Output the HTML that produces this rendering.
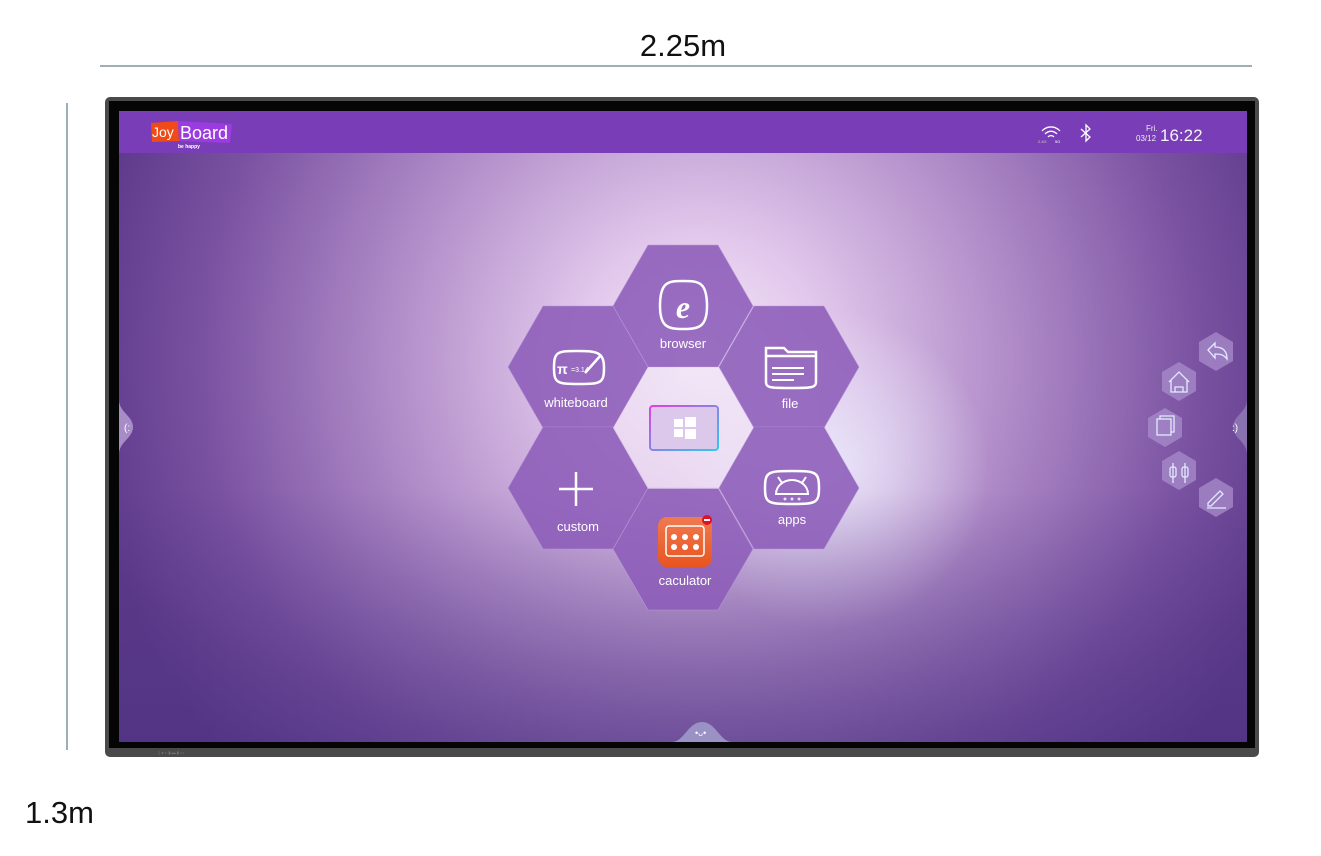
<!DOCTYPE html>
<html><head><meta charset="utf-8"><style>
html,body{margin:0;padding:0;background:#fff;}
svg{display:block;font-family:"Liberation Sans",sans-serif;}
</style></head><body>
<svg width="1321" height="856" viewBox="0 0 1321 856" xmlns="http://www.w3.org/2000/svg">
<defs>
<radialGradient id="bg1" cx="700" cy="360" r="620" gradientUnits="userSpaceOnUse">
<stop offset="0" stop-color="#f3e8f8"/>
<stop offset="0.2" stop-color="#e2c8ec"/>
<stop offset="0.5" stop-color="#b08cc8"/>
<stop offset="0.8" stop-color="#7a52a2"/>
<stop offset="1" stop-color="#5e3a8a"/>
</radialGradient>
<radialGradient id="bg2" cx="830" cy="470" r="160" gradientUnits="userSpaceOnUse">
<stop offset="0" stop-color="#eef0ff" stop-opacity="0.8"/>
<stop offset="1" stop-color="#eef0ff" stop-opacity="0"/>
</radialGradient>
<linearGradient id="bot" x1="0" y1="0" x2="0" y2="1">
<stop offset="0.6" stop-color="#4a3080" stop-opacity="0"/>
<stop offset="1" stop-color="#4a3080" stop-opacity="0.55"/>
</linearGradient>
<linearGradient id="win" x1="0" y1="0" x2="1" y2="1">
<stop offset="0" stop-color="#e040e0"/><stop offset="1" stop-color="#30c8f0"/>
</linearGradient>
<linearGradient id="calc" x1="0" y1="0" x2="0" y2="1">
<stop offset="0" stop-color="#f07a50"/><stop offset="1" stop-color="#e85420"/>
</linearGradient>
</defs>
<text x="683" y="56" font-size="31" text-anchor="middle" fill="#111">2.25m</text>
<line x1="100" y1="66" x2="1252" y2="66" stroke="#3f5f6f" stroke-width="1"/>
<line x1="67" y1="103" x2="67" y2="750" stroke="#3f5f6f" stroke-width="1"/>
<text x="25" y="823" font-size="31" fill="#111">1.3m</text>

<rect x="105" y="97" width="1154" height="660" rx="5" fill="#4a4a4a"/>
<rect x="109" y="101" width="1146" height="647" fill="#050505"/>
<rect x="119" y="111" width="1128" height="631" fill="url(#bg1)"/>
<rect x="119" y="111" width="1128" height="631" fill="url(#bg2)"/>
<rect x="119" y="111" width="1128" height="631" fill="url(#bot)"/>
<rect x="119" y="111" width="1128" height="42" fill="#7a3db8"/>
<g fill="#777" font-size="4"><text x="158" y="754">▯ ● ◐ ▮ ▬ ▮ • •</text></g>

<!-- logo -->
<polygon points="151,123 178,121 179,141 152,142" fill="#f04a18"/>
<polygon points="178,121 232,124 230,143 179,141" fill="#9a3ce0"/>
<text x="152" y="137" font-size="14" fill="#fff">Joy</text>
<text x="180" y="139" font-size="18" fill="#fff">Board</text>
<text x="178" y="148" font-size="5" fill="#fff" font-weight="bold">be happy</text>

<!-- status -->
<g fill="none" stroke="#fff" stroke-width="1.3">
<path d="M1042,131 a12,12 0 0 1 18,0 M1045,134 a8,8 0 0 1 12,0 M1048,137 a4,4 0 0 1 6,0"/>
<path d="M1081,129 l9,8 l-4,4 v-16 l4,4 l-9,8"/>
</g>
<text x="1038" y="143" font-size="4" fill="#ccc">2.4G</text>
<text x="1055" y="143" font-size="4" fill="#fff">5G</text>
<text x="1146" y="131" font-size="8" fill="#eee">Fri.</text>
<text x="1136" y="141" font-size="8" fill="#eee">03/12</text>
<text x="1160" y="141" font-size="17" fill="#f4f4f4">16:22</text>

<!-- hexes -->
<g fill="#8c5cb8" fill-opacity="0.88" stroke="#b898d8" stroke-width="0.6">
<polygon points="613,306 648,245 718,245 753,306 718,367 648,367"/>
<polygon points="508,367 543,306 613,306 648,367 613,428 543,428"/>
<polygon points="719,367 754,306 824,306 859,367 824,428 754,428"/>
<polygon points="508,488 543,427 613,427 648,488 613,549 543,549"/>
<polygon points="719,488 754,427 824,427 859,488 824,549 754,549"/>
<polygon points="613,549 648,488 718,488 753,549 718,610 648,610"/>
</g>
<polygon points="613,428 648,367 718,367 753,428 718,489 648,489" fill="#f2e6f6" fill-opacity="0.5"/>
<rect x="650" y="406" width="68" height="44" rx="3" fill="#dcc8ea" stroke="url(#win)" stroke-width="2"/>
<g fill="#fff"><rect x="674" y="419" width="9" height="8"/><rect x="685" y="417" width="11" height="10"/><rect x="674" y="429" width="9" height="8"/><rect x="685" y="429" width="11" height="10"/></g>

<g fill="#fff" font-size="13" text-anchor="middle">
<text x="683" y="348">browser</text>
<text x="576" y="407">whiteboard</text>
<text x="790" y="408">file</text>
<text x="578" y="531">custom</text>
<text x="792" y="524">apps</text>
<text x="685" y="585">caculator</text>
</g>
<g fill="none" stroke="#fff" stroke-width="2.5">
<path d="M660,306 c0,-24 8,-25 23,-25 c16,0 24,1 24,25 c0,21 -8,23 -24,23 c-15,0 -23,-2 -23,-23z"/>
<path d="M554,368 c0,-16 3,-17 23,-17 c20,0 27,1 27,17 c0,15 -3,16 -25,16 c-22,0 -25,-1 -25,-16z"/>
<path d="M766,354 v-6 h18 l4,4 h28 v30 c0,6 -6,6 -25,6 c-20,0 -25,0 -25,-6z M766,356 h50"/>
<path d="M772,368 h32 M772,374 h32 M772,380 h22" stroke-width="2"/>
<path d="M576,472 v34 M559,489 h34"/>
<path d="M765,488 c0,-16 3,-17 27,-17 c24,0 27,1 27,17 c0,15 -3,16 -27,16 c-24,0 -27,-1 -27,-16z"/>
<path d="M776,494 a16,14 0 0 1 32,0z M778,477 l4,6 M806,477 l-4,6" stroke-width="2"/>
</g>
<text x="683" y="318" font-size="32" font-style="italic" font-weight="bold" fill="#fff" text-anchor="middle" font-family="Liberation Serif,serif">e</text>
<text x="557" y="374" font-size="14" font-weight="bold" fill="#fff">π</text>
<text x="571" y="372" font-size="7" fill="#fff">=3.14</text>
<path d="M585,373 l16,-18" stroke="#fff" stroke-width="2.5"/>
<g fill="#fff" opacity="0.8"><circle cx="785" cy="499" r="1.5"/><circle cx="792" cy="499" r="1.5"/><circle cx="799" cy="499" r="1.5"/></g>

<rect x="658" y="517" width="54" height="50" rx="9" fill="url(#calc)"/>
<rect x="666" y="526" width="38" height="30" rx="3" fill="none" stroke="#fff" stroke-width="1.5"/>
<g fill="#fff"><circle cx="674" cy="537" r="3"/><circle cx="685" cy="537" r="3"/><circle cx="696" cy="537" r="3"/><circle cx="674" cy="547" r="3"/><circle cx="685" cy="547" r="3"/><circle cx="696" cy="547" r="3"/></g>
<circle cx="707" cy="520" r="5" fill="#e0102a"/><rect x="704" y="519" width="6" height="2" fill="#fff"/>

<!-- side handles -->
<path d="M119,400 c0,12 14,16 14,27 c0,11 -14,15 -14,27z" fill="#a88cc8"/>
<path d="M1247,400 c0,12 -14,16 -14,27 c0,11 14,15 14,27z" fill="#8a72b0"/>
<text x="124" y="431" font-size="10" fill="#fff">(:</text>
<text x="1232" y="431" font-size="10" fill="#fff">:)</text>
<path d="M672,742 c12,0 16,-20 30,-20 c14,0 18,20 30,20z" fill="#9a92c4"/>
<text x="695" y="736" font-size="9" fill="#fff">•ᴗ•</text>

<!-- right small hexes -->
<g fill="#a88ccb" fill-opacity="0.75">
<polygon points="1216,332 1233,342 1233,361 1216,371 1199,361 1199,342"/>
<polygon points="1179,362 1196,372 1196,391 1179,401 1162,391 1162,372"/>
<polygon points="1165,408 1182,418 1182,437 1165,447 1148,437 1148,418"/>
<polygon points="1179,451 1196,461 1196,480 1179,490 1162,480 1162,461"/>
<polygon points="1216,478 1233,488 1233,507 1216,517 1199,507 1199,488"/>
</g>
<g fill="none" stroke="#e4eaff" stroke-width="1.3">
<path d="M1208,350 l7,-7 v4 c8,0 12,4 12,12 c-3,-4 -6,-5 -12,-5 v4z"/>
<path d="M1169,382 l10,-10 l10,10 M1171,380 v12 h16 v-12 M1175,392 v-5 h8 v5"/>
<rect x="1157" y="419" width="14" height="16"/><path d="M1160,419 v-3 h14 v16 h-3"/>
<path d="M1173,463 v20 M1185,463 v20"/><rect x="1170" y="467" width="6" height="10" rx="2"/><rect x="1182" y="467" width="6" height="10" rx="2"/>
<path d="M1208,503 l12,-12 l3,3 l-12,12 h-3z M1207,508 h19"/>
</g>
</svg>
</body></html>
